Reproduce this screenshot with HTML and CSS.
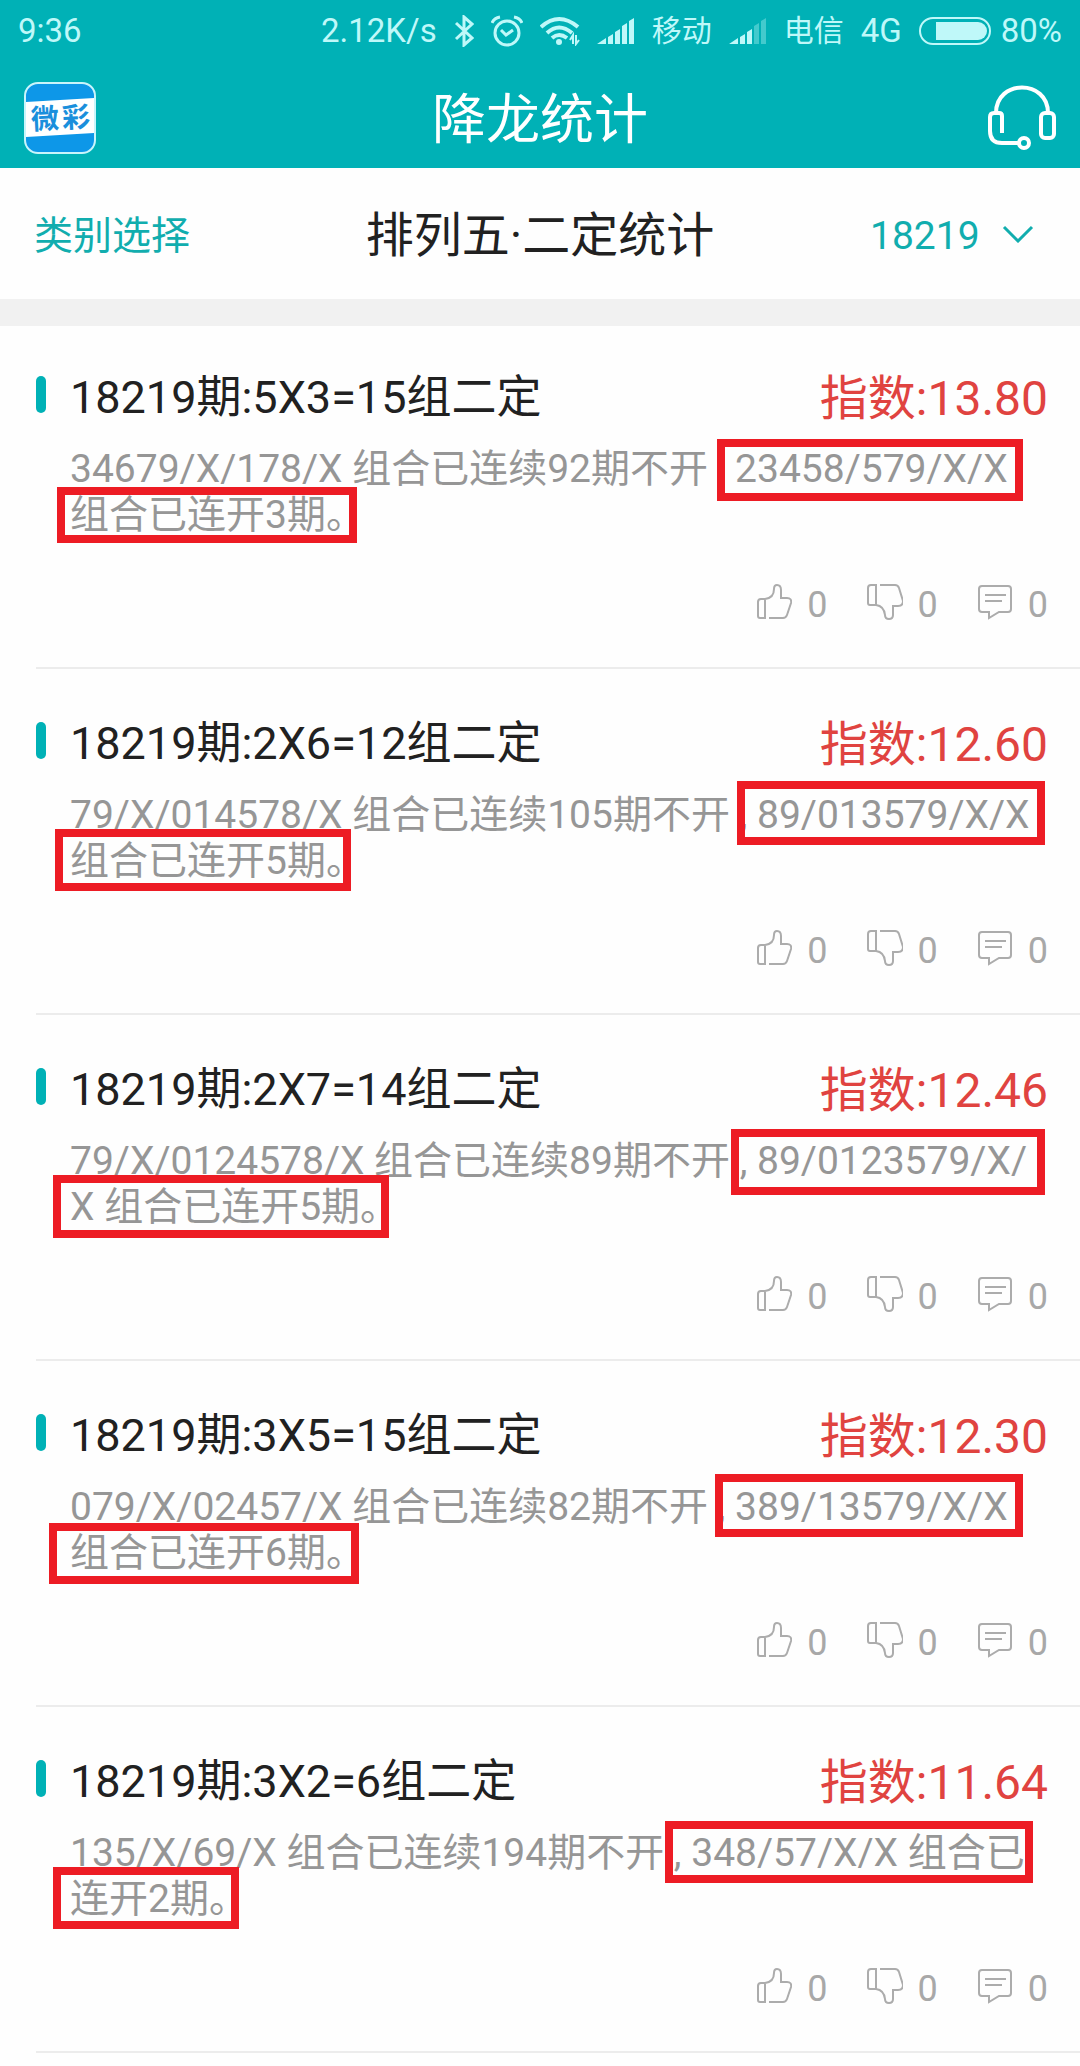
FILE: index.html
```
<!DOCTYPE html>
<html lang="zh-CN">
  <head>
    <meta charset="utf-8">
    <meta name="viewport" content="width=device-width">
    <title>降龙统计</title>
    <link rel="stylesheet" href="styles.css">
  </head>
  <body>
    <!-- icons used more than once -->
    <svg class="sprite" aria-hidden="true">
      <symbol id="up" viewBox="0 0 36 36">
        <path d="M9 34H4Q2 34 2 32V18Q2 15 5 15H9ZM13 34H27Q30 34 31 31L35 19Q36 14 31 14H25V6Q25 1 21 1Q18 1 18 5Q18 14 9 15"/>
      </symbol>
      <symbol id="down" viewBox="0 0 36 36">
        <path d="M9 1H4Q1 1 1 4V19Q1 21 3 21H9ZM13 1H28Q31 1 32 4L36 17Q36 22 31 22H26V31Q26 35 22 35Q18 35 18 31Q17 22 9 21"/>
      </symbol>
      <symbol id="comment" viewBox="0 0 36 36">
        <path d="M5 2H31Q34 2 34 5V25Q34 28 31 28H22L12 34V28H5Q2 28 2 25V5Q2 2 5 2ZM8 11H29M8 17H25"/>
      </symbol>
    </svg>

    <header class="header">
      <div class="status">
        <span class="time">9:36</span>
        <span>2.12K/s</span>
        <svg width="20" height="32" viewBox="0 0 20 32"><path class="line" d="M2 8L18 23L10 30V2L18 9L2 24"/></svg>
        <svg width="32" height="32" viewBox="0 0 32 32"><circle class="line" cx="16" cy="18" r="12"/><path class="line" d="M10 15L15 20L22 15M1 8Q3 3 9 2M23 2Q29 3 31 8"/></svg>
        <svg width="40" height="30" viewBox="0 0 40 30">
          <path class="line wide" d="M1 11Q19 -5 38 11M7 17Q19 6 32 17M12 22Q19 16 27 22"/>
          <circle class="solid" cx="19" cy="26" r="3"/>
          <path class="line thin" d="M33 28V19L30 24M36 19V28L39 24"/>
        </svg>
        <svg width="38" height="26" viewBox="0 0 38 26"><path class="solid" d="M0 26L9 20V26ZM11 26V19L16 16V26ZM18 26V14L23 11V26ZM25 26V8L30 5V26ZM32 26V3L37 0V26Z"/></svg>
        <span class="carrier">移动</span>
        <svg width="38" height="26" viewBox="0 0 38 26"><path class="solid" d="M0 26L9 20V26ZM11 26V19L16 16V26ZM18 26V14L23 11V26Z"/><path class="solid dim" d="M25 26V8L30 5V26ZM32 26V3L37 0V26Z"/></svg>
        <span class="carrier">电信</span>
        <span>4G</span>
        <span class="battery">
          <svg width="72" height="28" viewBox="0 0 72 28"><rect class="line thin" x="1" y="1" width="70" height="26" rx="13"/><path class="solid" d="M17 5H59A9 9 0 0 1 59 23H17Z"/></svg>
          80%
        </span>
      </div>
      <div class="titlebar">
        <a class="logo" href="#" aria-label="微彩">
          <svg width="72" height="72" viewBox="0 0 72 72">
            <rect x="1" y="1" width="70" height="70" rx="13" fill="#0d97e8" stroke="#c9f5fb" stroke-width="2"/>
            <path d="M2 20L70 16V51L2 55Z" fill="#fff"/>
            <g transform="rotate(-3 36 36)">
              <text x="7" y="46">微</text>
              <text x="38" y="46">彩</text>
            </g>
          </svg>
        </a>
        <h1>降龙统计</h1>
        <button class="service" type="button" aria-label="客服">
          <svg width="68" height="66" viewBox="0 0 68 66">
            <path d="M8 28C8 -6 60 -6 60 28M14 48V31Q14 28 11 28H6Q2 28 2 32V46Q2 58 14 58H30"/>
            <rect x="53" y="28" width="13" height="25" rx="4"/>
            <circle cx="36" cy="58" r="5"/>
          </svg>
        </button>
      </div>
    </header>

    <nav class="filter">
      <button class="category" type="button">类别选择</button>
      <h2>排列五·二定统计</h2>
      <div class="period">
        <select aria-label="期号">
          <option>18219</option>
        </select>
        <svg width="32" height="18" viewBox="0 0 32 18"><path d="M2 2L16 16L30 2"/></svg>
      </div>
    </nav>

    <main class="list">
      <article class="item">
        <div class="head">
          <h3>18219期:5X3=15组二定</h3>
          <span class="index">指数:13.80</span>
        </div>
        <p class="desc">34679/X/178/X 组合已连续92期不开 , 23458/579/X/X 组合已连开3期。<span class="frame frame-1a"></span><span class="frame frame-1b"></span></p>
        <div class="actions">
          <button type="button" aria-label="赞"><svg><use href="#up"/></svg>0</button>
          <button type="button" aria-label="踩"><svg><use href="#down"/></svg>0</button>
          <button type="button" aria-label="评论"><svg><use href="#comment"/></svg>0</button>
        </div>
      </article>

      <article class="item">
        <div class="head">
          <h3>18219期:2X6=12组二定</h3>
          <span class="index">指数:12.60</span>
        </div>
        <p class="desc">79/X/014578/X 组合已连续105期不开 , 89/013579/X/X 组合已连开5期。<span class="frame frame-2a"></span><span class="frame frame-2b"></span></p>
        <div class="actions">
          <button type="button" aria-label="赞"><svg><use href="#up"/></svg>0</button>
          <button type="button" aria-label="踩"><svg><use href="#down"/></svg>0</button>
          <button type="button" aria-label="评论"><svg><use href="#comment"/></svg>0</button>
        </div>
      </article>

      <article class="item">
        <div class="head">
          <h3>18219期:2X7=14组二定</h3>
          <span class="index">指数:12.46</span>
        </div>
        <p class="desc">79/X/0124578/X 组合已连续89期不开 , 89/0123579/X/<wbr>X 组合已连开5期。<span class="frame frame-3a"></span><span class="frame frame-3b"></span></p>
        <div class="actions">
          <button type="button" aria-label="赞"><svg><use href="#up"/></svg>0</button>
          <button type="button" aria-label="踩"><svg><use href="#down"/></svg>0</button>
          <button type="button" aria-label="评论"><svg><use href="#comment"/></svg>0</button>
        </div>
      </article>

      <article class="item">
        <div class="head">
          <h3>18219期:3X5=15组二定</h3>
          <span class="index">指数:12.30</span>
        </div>
        <p class="desc">079/X/02457/X 组合已连续82期不开 , 389/13579/X/X 组合已连开6期。<span class="frame frame-4a"></span><span class="frame frame-4b"></span></p>
        <div class="actions">
          <button type="button" aria-label="赞"><svg><use href="#up"/></svg>0</button>
          <button type="button" aria-label="踩"><svg><use href="#down"/></svg>0</button>
          <button type="button" aria-label="评论"><svg><use href="#comment"/></svg>0</button>
        </div>
      </article>

      <article class="item">
        <div class="head">
          <h3>18219期:3X2=6组二定</h3>
          <span class="index">指数:11.64</span>
        </div>
        <p class="desc">135/X/69/X 组合已连续194期不开 , 348/57/X/X 组合已连开2期。<span class="frame frame-5a"></span><span class="frame frame-5b"></span></p>
        <div class="actions">
          <button type="button" aria-label="赞"><svg><use href="#up"/></svg>0</button>
          <button type="button" aria-label="踩"><svg><use href="#down"/></svg>0</button>
          <button type="button" aria-label="评论"><svg><use href="#comment"/></svg>0</button>
        </div>
      </article>
    </main>
  </body>
</html>
```
FILE: styles.css
```
* {
  box-sizing: border-box;
}
body {
  margin: 0;
  background-color: #fefefe;
  color: #212121;
  font-family: Roboto, "Noto Sans CJK SC", sans-serif;
}
h1, h2, h3, p {
  margin: 0;
  font-weight: 400;
}
button, select {
  margin: 0;
  padding: 0;
  border: 0;
  background: none;
  color: inherit;
  font: inherit;
}
svg {
  display: block;
  flex: none;
  fill: none;
}
.sprite {
  position: absolute;
  width: 0;
  height: 0;
}

/* header */
.header {
  background-color: #00b1b6;
  color: #fff;
}
.status {
  display: flex;
  align-items: center;
  gap: 17px;
  padding: 11px 18px 17px;
  color: #bff8f9;
  font-size: 33px;
  line-height: 40px;
  white-space: nowrap;
}
.time {
  margin-right: auto;
}
.carrier {
  font-size: 30px;
}
.battery {
  display: flex;
  align-items: center;
  gap: 10px;
}
.line {
  stroke: #bff8f9;
  stroke-width: 3;
}
.wide {
  stroke-width: 4;
}
.thin {
  stroke-width: 2;
}
.solid {
  fill: #bff8f9;
}
.dim {
  opacity: 0.35;
}
.titlebar {
  display: grid;
  grid-template-columns: 1fr auto 1fr;
  align-items: center;
  height: 100px;
  padding: 0 24px;
}
.titlebar h1 {
  padding-top: 6px;
  font-size: 54px;
  line-height: 64px;
}
.logo text {
  fill: #1a8fdc;
  font-size: 28px;
  font-weight: 700;
}
.service {
  justify-self: end;
}
.service svg {
  stroke: #fff;
  stroke-width: 4;
}

/* filter row */
.filter {
  display: grid;
  grid-template-columns: 1fr auto 1fr;
  align-items: center;
  padding: 40px 34px 35px;
  border-bottom: 27px solid #f1f1f1;
}
.filter h2 {
  font-size: 48px;
  line-height: 56px;
}
.category, .period {
  color: #11adae;
  font-size: 39px;
  line-height: 46px;
}
.category {
  justify-self: start;
}
.period {
  position: relative;
  justify-self: end;
}
.period select {
  appearance: none;
  padding-right: 66px;
}
.period svg {
  position: absolute;
  top: 12px;
  right: 12px;
  stroke: #11adae;
  stroke-width: 3;
  pointer-events: none;
}

/* list */
.item {
  margin-left: 36px;
  padding: 48px 32px 41px 0;
  border-bottom: 2px solid #ececec;
}
.item:first-child {
  padding-top: 45px;
}
.head {
  display: flex;
  align-items: flex-start;
  margin-bottom: 19px;
}
.head::before {
  content: "";
  width: 10px;
  height: 37px;
  margin: 5px 24px 0 0;
  border-radius: 5px;
  background-color: #00b1b6;
}
.head h3 {
  flex: 1;
  font-size: 45px;
  line-height: 54px;
}
.index {
  color: #e04340;
  font-size: 48px;
  line-height: 56px;
}
.desc {
  position: relative;
  margin-left: 34px;
  color: #969696;
  font-size: 39px;
  line-height: 46px;
}
.actions {
  display: flex;
  justify-content: flex-end;
  gap: 39px;
  margin-top: 46px;
}
.actions button {
  display: flex;
  gap: 15px;
  color: #a8a8a8;
  font-size: 36px;
  line-height: 42px;
}
.actions svg {
  width: 36px;
  height: 36px;
  stroke: #acacac;
  stroke-width: 2;
}

/* red frames drawn over the text */
.frame {
  position: absolute;
  border: 8px solid #ed1c24;
}
.frame-1a {
  top: -7px;
  left: 647px;
  width: 306px;
  height: 62px;
}
.frame-1b {
  top: 41px;
  left: -13px;
  width: 300px;
  height: 56px;
}
.frame-2a {
  top: -11px;
  left: 667px;
  width: 308px;
  height: 64px;
}
.frame-2b {
  top: 37px;
  left: -15px;
  width: 296px;
  height: 62px;
}
.frame-3a {
  top: -9px;
  left: 661px;
  width: 314px;
  height: 66px;
}
.frame-3b {
  top: 37px;
  left: -17px;
  width: 336px;
  height: 63px;
}
.frame-4a {
  top: -10px;
  left: 645px;
  width: 308px;
  height: 63px;
}
.frame-4b {
  top: 39px;
  left: -21px;
  width: 310px;
  height: 61px;
}
.frame-5a {
  top: -9px;
  left: 595px;
  width: 368px;
  height: 62px;
}
.frame-5b {
  top: 37px;
  left: -17px;
  width: 186px;
  height: 62px;
}
```
